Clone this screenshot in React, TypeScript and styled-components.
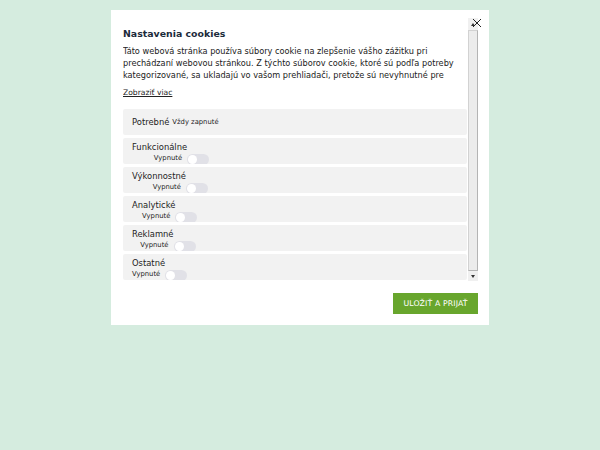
import React from 'react';
import styled, { createGlobalStyle } from 'styled-components';

const GlobalStyle = createGlobalStyle`
	html, body {
		margin: 0;
		padding: 0;
		background: #d5ecdf;
		font-family: 'DejaVu Sans', 'Liberation Sans', sans-serif;
	}
`;

const Overlay = styled.div`
	width: 600px;
	height: 450px;
	display: flex;
	justify-content: center;
	align-items: flex-start;
	padding-top: 10px;
	box-sizing: border-box;
`;

const Modal = styled.div`
	position: relative;
	width: 378px;
	height: 315px;
	box-sizing: border-box;
	background: #ffffff;
	padding: 8px 11px 11px 12px;
	display: flex;
	flex-direction: column;
`;

const Close = styled.button`
	position: absolute;
	top: 8px;
	right: 7px;
	width: 10px;
	height: 10px;
	padding: 0;
	border: none;
	background: transparent;
	display: flex;
	align-items: center;
	justify-content: center;
	z-index: 2;
`;

const Body = styled.div`
	display: flex;
	height: 263px;
	gap: 1px;
`;

const Content = styled.div`
	flex: 1;
	overflow: hidden;
	padding-top: 9px;
	box-sizing: border-box;
`;

const Scrollbar = styled.div`
	width: 10px;
	display: flex;
	flex-direction: column;
	background: #f1f1f1;
	padding-top: 2px;
	box-sizing: border-box;
`;

const Arrow = styled.div<{ $down?: boolean }>`
	height: 9px;
	background: #f0f0f0;
	display: flex;
	align-items: center;
	justify-content: center;

	&::before {
		content: '';
		width: 0;
		height: 0;
		border-left: 2.5px solid transparent;
		border-right: 2.5px solid transparent;
		${(p) => (p.$down ? 'border-top: 3px solid #333;' : 'border-bottom: 3px solid #333;')}
	}
`;

const Thumb = styled.div`
	flex: 1;
	margin: 1px 0;
	background: #ececec;
	border: 1px solid #d2d2d2;
	border-right-color: #b4b4b4;
	border-bottom-color: #b4b4b4;
`;

const Title = styled.h2`
	margin: 0 0 4px 0;
	font-size: 9.4px;
	line-height: 14px;
	font-weight: bold;
	color: #1c2b3b;
`;

const Description = styled.p`
	margin: 0;
	font-size: 8.2px;
	line-height: 12px;
	color: #222;
	max-height: 37px;
	overflow: hidden;
`;

const MoreLink = styled.a`
	display: block;
	width: fit-content;
	margin: 6px 0 11px 0;
	font-size: 7.6px;
	line-height: 10px;
	color: #222;
	text-decoration: underline;
`;

const Rows = styled.div`
	display: flex;
	flex-direction: column;
	gap: 3.5px;
`;

const Row = styled.div<{ $center?: boolean }>`
	height: 25.5px;
	flex-shrink: 0;
	box-sizing: border-box;
	background: #f2f2f2;
	border-radius: 2px;
	padding: ${(p) => (p.$center ? '0 9px' : '4px 9px 0 9px')};
	display: flex;
	align-items: ${(p) => (p.$center ? 'center' : 'flex-start')};
	overflow: hidden;
	color: #222;
`;

const Label = styled.span`
	font-size: 8.4px;
	line-height: 10px;
`;

const Always = styled.span`
	font-size: 6.8px;
	margin-left: 3px;
`;

const Switcher = styled.label`
	display: inline-grid;
	grid-template-columns: auto auto;
	align-items: center;
`;

const Status = styled.span`
	grid-column: 1;
	grid-row: 2;
	justify-self: end;
	margin-right: 5px;
	font-size: 6.8px;
	line-height: 9px;
`;

const Toggle = styled.span`
	grid-column: 2;
	grid-row: 2;
	position: relative;
	width: 22px;
	height: 11px;
	margin-top: 2px;
	border-radius: 6px;
	background: #e1e1e7;

	&::after {
		content: '';
		position: absolute;
		left: 1px;
		top: 1px;
		width: 9px;
		height: 9px;
		border-radius: 50%;
		background: #ffffff;
	}
`;

const Footer = styled.div`
	display: flex;
	justify-content: flex-end;
	padding-top: 12px;
`;

const SaveButton = styled.button`
	width: 85px;
	height: 21px;
	border: none;
	background: #68a62d;
	color: #ffffff;
	font-family: 'DejaVu Sans', 'Liberation Sans', sans-serif;
	font-size: 7.8px;
	letter-spacing: 0.1px;
	padding: 0;
`;

const categories = ['Funkcionálne', 'Výkonnostné', 'Analytické', 'Reklamné', 'Ostatné'];

const App = () => {
	return (
		<>
			<GlobalStyle />
			<Overlay>
				<Modal>
					<Close aria-label='Zavrieť'>
						<svg width='10' height='10' viewBox='0 0 10 10'>
							<path d='M1 1 L9 9 M9 1 L1 9' stroke='#222' strokeWidth='1' />
						</svg>
					</Close>
					<Body>
						<Content>
							<Title>Nastavenia cookies</Title>
							<Description>
								Táto webová stránka používa súbory cookie na zlepšenie vášho zážitku pri
								prechádzaní webovou stránkou. Z týchto súborov cookie, ktoré sú podľa potreby
								kategorizované, sa ukladajú vo vašom prehliadači, pretože sú nevyhnutné pre
								fungovanie základných funkcií webovej stránky.
							</Description>
							<MoreLink href='#'>Zobraziť viac</MoreLink>
							<Rows>
								<Row $center>
									<Label>Potrebné</Label>
									<Always>Vždy zapnuté</Always>
								</Row>
								{categories.map((name) => (
									<Row key={name}>
										<Switcher>
											<Label>{name}</Label>
											<Status>Vypnuté</Status>
											<Toggle />
										</Switcher>
									</Row>
								))}
							</Rows>
						</Content>
						<Scrollbar>
							<Arrow />
							<Thumb />
							<Arrow $down />
						</Scrollbar>
					</Body>
					<Footer>
						<SaveButton>ULOŽIŤ A PRIJAŤ</SaveButton>
					</Footer>
				</Modal>
			</Overlay>
		</>
	);
};

export default App;
